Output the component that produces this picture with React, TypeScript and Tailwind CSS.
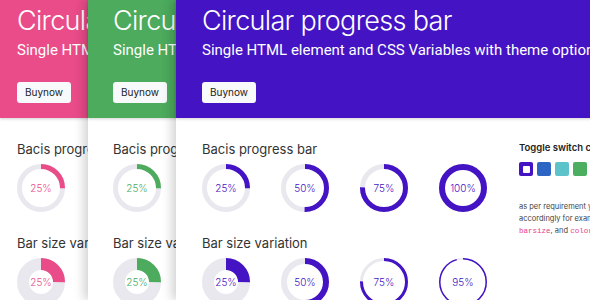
const font = { fontFamily: 'Inter, "Liberation Sans", sans-serif' };

type RingProps = { value: number; color: string; width: number };

function Ring({ value, color, width }: RingProps) {
  const size = 48;
  const r = (size - width) / 2;
  const c = 2 * Math.PI * r;
  return (
    <div className="grid h-[48px] w-[48px] shrink-0 place-items-center">
      <svg width={size} height={size} className="[grid-area:1/1] -rotate-90">
        <circle cx={24} cy={24} r={r} fill="none" stroke="#e8e8ee" strokeWidth={width} />
        <circle
          cx={24}
          cy={24}
          r={r}
          fill="none"
          stroke={color}
          strokeWidth={width}
          strokeDasharray={`${(c * value) / 100} ${c}`}
        />
      </svg>
      <span className="[grid-area:1/1] text-[10px] font-light leading-none" style={{ color }}>
        {value}%
      </span>
    </div>
  );
}

type PanelProps = { left: string; bg: string; color: string; pad: string; shadow?: boolean };

function Panel({ left, bg, color, pad, shadow }: PanelProps) {
  return (
    <div
      className={`absolute top-0 h-[300px] w-[620px] bg-white ${left} ${
        shadow ? 'shadow-[-4px_0_10px_rgba(0,0,0,0.18)]' : ''
      }`}
    >
      {/* header */}
      <div className={`h-[118px] ${bg} ${pad} pt-[4px] shadow-[0_1px_3px_rgba(0,0,0,0.18)]`}>
        <h1 className="whitespace-nowrap text-[27px] font-light leading-[34px] tracking-tight text-white">
          Circular progress bar
        </h1>
        <p className="mt-[2px] whitespace-nowrap font-['Roboto',sans-serif] text-[15px] leading-[20px] text-white">
          Single HTML element and CSS Variables with theme option ready
        </p>
        <button className="mt-[22px] h-[21px] w-[54px] rounded-[3px] bg-[#f8f9fb] text-[10px] text-[#222]">
          Buynow
        </button>
      </div>

      {/* body */}
      <div className={`flex ${pad} pt-[22px]`}>
        <div className="w-[285px]">
          <h2 className="text-[13px] leading-[18px] text-[#333]">Bacis progress bar</h2>
          <div className="mt-[6px] flex gap-[31px]">
            <Ring value={25} color={color} width={5} />
            <Ring value={50} color={color} width={5} />
            <Ring value={75} color={color} width={5} />
            <Ring value={100} color={color} width={6} />
          </div>
          <h2 className="mt-[22px] text-[13px] leading-[18px] text-[#333]">Bar size variation</h2>
          <div className="mt-[6px] flex gap-[31px]">
            <Ring value={25} color={color} width={12} />
            <Ring value={50} color={color} width={6} />
            <Ring value={75} color={color} width={3} />
            <Ring value={95} color={color} width={1.5} />
          </div>
        </div>
        <div className="ml-[32px] pt-[1px]">
          <h3 className="whitespace-nowrap text-[9.5px] font-semibold leading-[14px] text-[#222]">
            Toggle switch color
          </h3>
          <div className="mt-[7px] flex gap-[4px]">
            <div className="grid h-[14px] w-[14px] place-items-center rounded-[2px] bg-[#4313c4]">
              <div className="h-[7px] w-[7px] rounded-[1px] bg-white" />
            </div>
            <div className="h-[14px] w-[14px] rounded-[2px] bg-[#2d65c5]" />
            <div className="h-[14px] w-[14px] rounded-[2px] bg-[#5bc3c9]" />
            <div className="h-[14px] w-[14px] rounded-[2px] bg-[#4caf60]" />
          </div>
          <div className="mt-[25px] whitespace-nowrap text-[7.5px] leading-[12px] text-[#444]">
            <div>as per requirement you can change the values</div>
            <div>accordingly for example: value,</div>
            <div>
              <code className="font-['Liberation_Mono',monospace] text-[#e83e8c]">barsize</code>, and{' '}
              <code className="font-['Liberation_Mono',monospace] text-[#e83e8c]">color</code> variables.
            </div>
          </div>
        </div>
      </div>
    </div>
  );
}

export default function App() {
  return (
    <div className="relative h-[300px] w-[590px] overflow-hidden bg-white" style={font}>
      <Panel left="left-0" bg="bg-[#ea4c89]" color="#ea4c89" pad="px-[17px]" />
      <Panel left="left-[88px]" bg="bg-[#4cab5d]" color="#4cab5d" pad="px-[25px]" shadow />
      <Panel left="left-[176px]" bg="bg-[#4313c4]" color="#4313c4" pad="px-[26px]" shadow />
    </div>
  );
}
